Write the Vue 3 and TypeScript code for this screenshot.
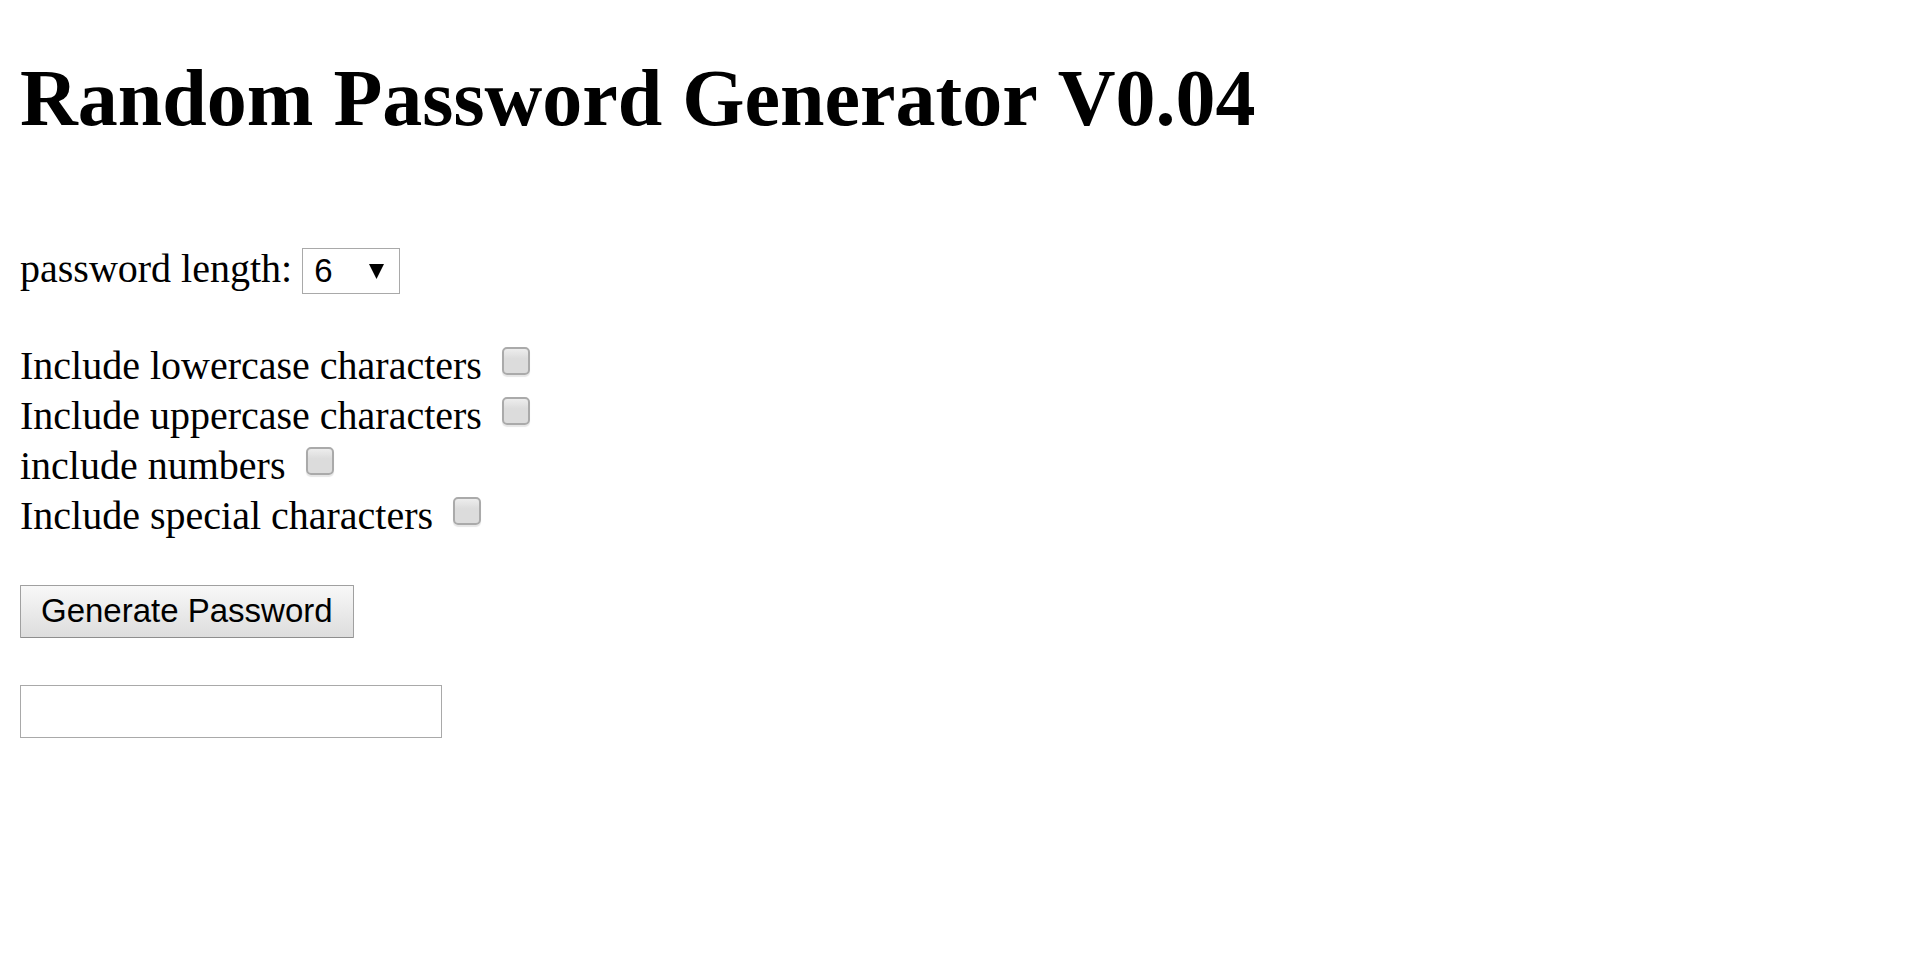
<script setup lang="ts">
import { reactive, ref } from 'vue'

interface CharacterSet {
  id: string
  label: string
  characters: string
  enabled: boolean
}

const lengths: number[] = Array.from({ length: 15 }, (_, i) => i + 6)
const passwordLength = ref<number>(6)
const password = ref<string>('')

const characterSets = reactive<CharacterSet[]>([
  { id: 'lowercase', label: 'Include lowercase characters', characters: 'abcdefghijklmnopqrstuvwxyz', enabled: false },
  { id: 'uppercase', label: 'Include uppercase characters', characters: 'ABCDEFGHIJKLMNOPQRSTUVWXYZ', enabled: false },
  { id: 'numbers', label: 'include numbers', characters: '0123456789', enabled: false },
  { id: 'special', label: 'Include special characters', characters: '!@#$%^&*()-_=+?', enabled: false },
])

function generate(): void {
  const pool = characterSets.filter((set) => set.enabled).map((set) => set.characters).join('')
  if (!pool) {
    password.value = ''
    return
  }
  const values = crypto.getRandomValues(new Uint32Array(passwordLength.value))
  password.value = Array.from(values, (value) => pool[value % pool.length]).join('')
}
</script>

<template>
  <main class="page">
    <h1 class="title">Random Password Generator V0.04</h1>
    <form class="form" @submit.prevent="generate">
      <div class="length">
        <label for="length">password length:</label>
        <div class="picker">
          <select id="length" v-model="passwordLength" class="select">
            <option v-for="n in lengths" :key="n" :value="n">{{ n }}</option>
          </select>
          <svg class="arrow" viewBox="0 0 15 15" aria-hidden="true"><path d="M0 0H15L7.5 15Z" /></svg>
        </div>
      </div>

      <div class="options">
        <div v-for="set in characterSets" :key="set.id" class="option">
          <label :for="set.id">{{ set.label }}</label>
          <input :id="set.id" v-model="set.enabled" type="checkbox" class="check" />
        </div>
      </div>

      <button type="submit" class="generate">Generate Password</button>
      <input v-model="password" type="text" class="result" aria-label="Generated password" readonly />
    </form>
  </main>
</template>

<style>
body {
  margin: 0;
  background: #fff;
}
</style>

<style scoped>
.page {
  padding: 52px 20px 20px;
  color: #000;
  font: 40px/50px "Liberation Serif", "Times New Roman", serif;
}

.title {
  margin: 0 0 100px;
  font-size: 80px;
  line-height: 92px;
  font-kerning: none;
}

.form {
  display: flex;
  flex-direction: column;
  align-items: flex-start;
}

.length {
  display: flex;
  align-items: flex-end;
  gap: 10px;
  margin-bottom: 47px;
}

.length label {
  line-height: 50px;
}

.picker {
  display: grid;
  align-items: center;
}

.select {
  grid-area: 1 / 1;
  appearance: none;
  box-sizing: border-box;
  width: 98px;
  height: 46px;
  margin: 0;
  padding: 0 11px;
  border: 1px solid #a9a9a9;
  border-radius: 0;
  background: #fff;
  color: #000;
  font: 33px/44px "Liberation Sans", Arial, sans-serif;
}

.arrow {
  grid-area: 1 / 1;
  justify-self: end;
  width: 15px;
  height: 15px;
  margin-right: 16px;
  pointer-events: none;
}

.options {
  margin-bottom: 44px;
}

.option {
  display: flex;
  align-items: flex-start;
  gap: 20px;
}

.check {
  appearance: none;
  box-sizing: border-box;
  width: 28px;
  height: 28px;
  margin: 6px 0 0;
  border: 2px solid #aaa;
  border-radius: 5px;
  background: linear-gradient(#ededed, #dcdcdc 40%, #dcdcdc);
  box-shadow: 0 2px 1px #e6e6e6;
}

.check:checked {
  background: #555;
}

.generate {
  box-sizing: border-box;
  height: 53px;
  margin: 0 0 47px;
  padding: 0 20px 2px;
  border: 1px solid #a0a0a0;
  border-bottom-color: #8e8e8e;
  border-radius: 1px;
  background: linear-gradient(#f8f8f8, #ddd);
  color: #000;
  font: 33px/48px "Liberation Sans", Arial, sans-serif;
}

.result {
  box-sizing: border-box;
  width: 422px;
  max-width: 100%;
  height: 53px;
  margin: 0;
  padding: 0 4px;
  border: 1px solid #a9a9a9;
  border-radius: 0;
  background: #fff;
  color: #000;
  font: 33px/50px "Liberation Sans", Arial, sans-serif;
}
</style>
